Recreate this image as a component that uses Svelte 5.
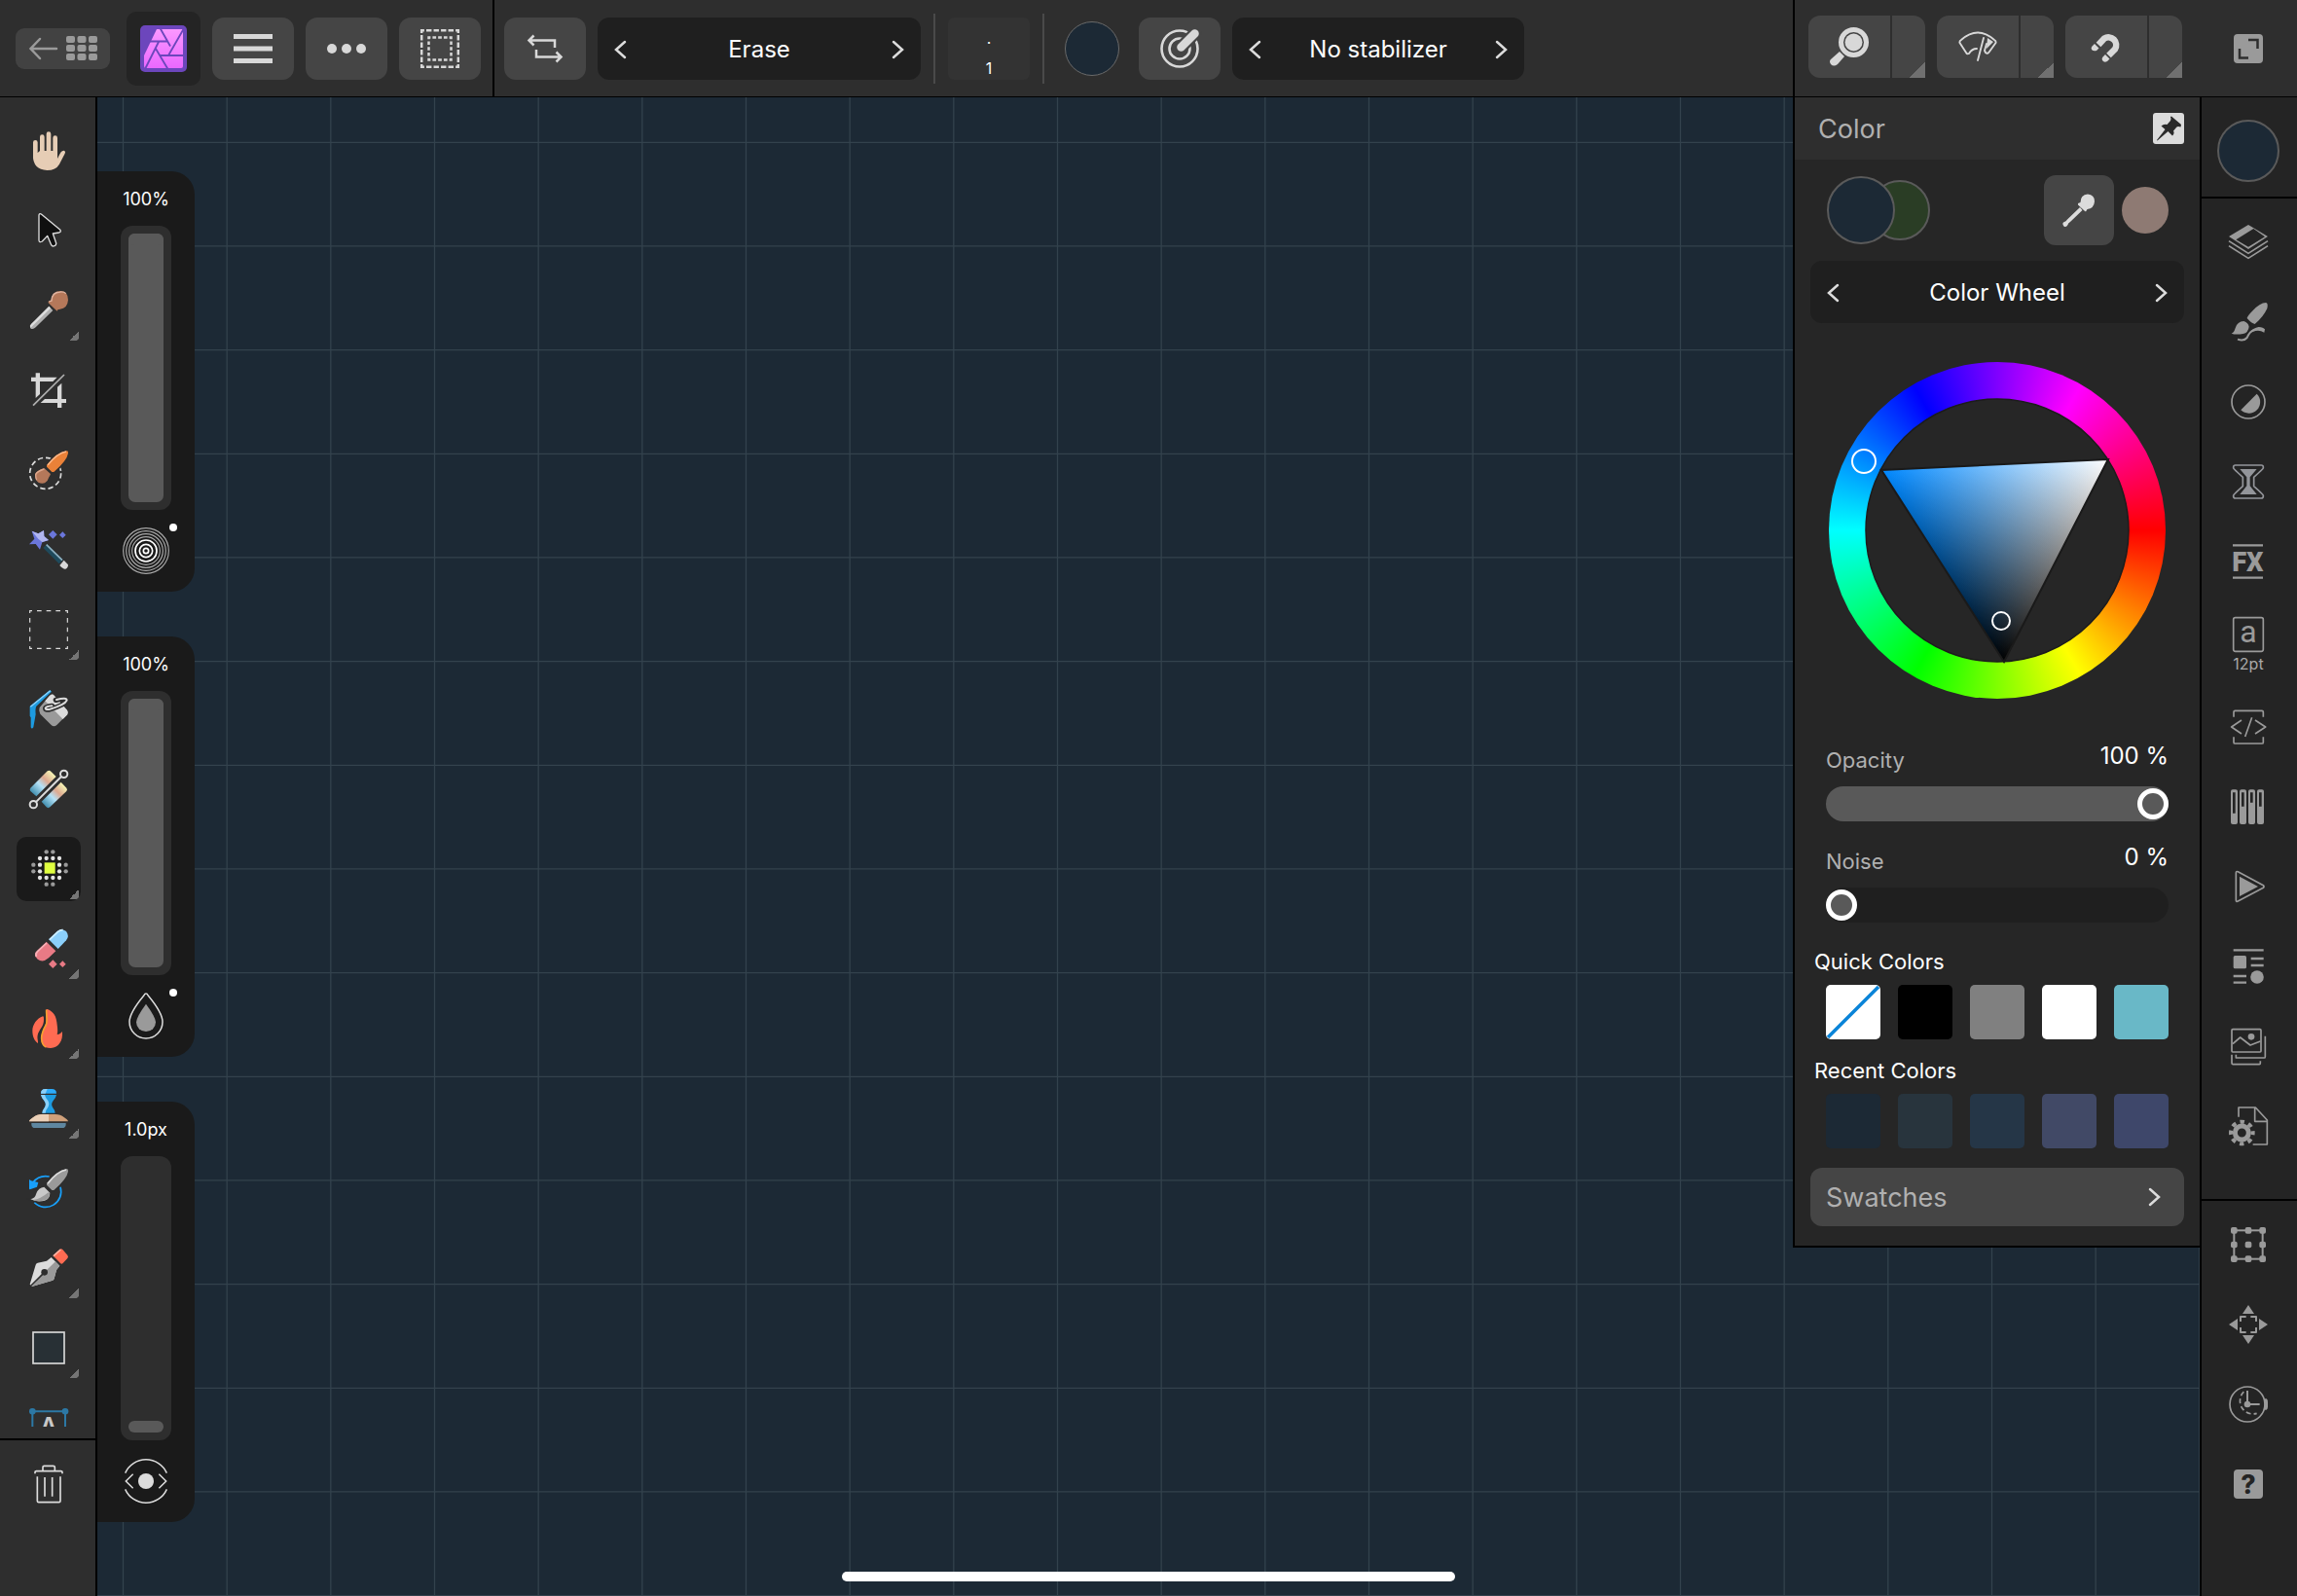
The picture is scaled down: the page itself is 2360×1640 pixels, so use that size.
<script>
  const toolIcons = {
    hand: `<g fill="none" stroke="#e6cdb5" stroke-width="14" stroke-linecap="round"><path d="M19 34V80M40 17V75M60 8V70M80 20V80"/></g><path fill="#e6cdb5" d="M12 66H26L33 60H87V84Q94 70 98 64Q103 58 109 60Q113 63 110 68L93 101Q82 120 55 120Q12 118 12 76Z"/>`,
    move: `<path fill="#0f0f0f" stroke="#dcdcdc" stroke-width="4" stroke-linejoin="round" d="M30 12Q32 5 38 10L95 57Q100 63 92 66L73 69L83 98Q84 105 78 107Q71 110 68 104L56 76L40 93Q31 98 30 90Z"/>`,
    picker: `<path fill="#b5785a" d="M59 32L67 28Q69 2 95 0Q120 0 120 28Q118 54 95 56L88 58L86 62L59 37Z"/><path fill="none" stroke="#dfb4a0" stroke-width="4" d="M61 33L69 30Q70 4 95 3Q108 2 113 8"/><path fill="#b0b0b0" d="M61 47L73 60L20 112Q12 120 5 116Q0 110 6 103Z"/><path fill="#dedede" d="M61 47L66 53L10 108L4 113Q0 107 6 102Z"/>`,
    crop: `<path fill="#d8d8d8" d="M6 20H20V7H33V20H86L73 33H33V72L20 84V33H6Z"/><path fill="#d8d8d8" d="M100 38V87H114V99H100V114H87V99H35L48 87H87V50Z"/><path stroke="#b0b0b0" stroke-width="5" d="M12 107L108 12"/>`,
    selbrush: `<circle cx="50" cy="70" r="48" fill="none" stroke="#dcdcdc" stroke-width="5" stroke-dasharray="16 9.1"/><g stroke="#2e2e2e" stroke-width="10" paint-order="stroke"><path fill="#ea8138" d="M116 1Q121 1 120 8Q117 30 76 66L70 66L54 50V45Q85 5 116 1Z"/></g><path fill="none" stroke="#ffb98a" stroke-width="4" d="M57 45Q86 8 114 3"/><path fill="#b5785a" d="M46 54L66 72Q64 78 61 82Q58 94 48 100Q38 103 28 98Q18 92 18 72Q24 62 46 54Z"/><path fill="none" stroke="#dfa88e" stroke-width="4" d="M46 57Q24 64 20 74Q20 84 23 91"/>`,
    wand: `<path fill="#6b77dc" d="M8 2L28 10L45 0L46 18L60 30L40 37L33 59L20 42L0 43L16 26Z"/><path fill="#b0b5f0" d="M8 2L28 10L45 0L46 18L60 30L40 36L28 26Z"/><path fill="#6b77dc" d="M73 0L86 13L73 26L60 13ZM103 4L113 14L103 24L93 14Z"/><path stroke="#1f4a5c" stroke-width="17" d="M49 48L98 97"/><path stroke="#8fb0c0" stroke-width="5" d="M53 44L102 92"/><path fill="#d8d8d8" d="M107 92L120 106Q120 116 112 119Q106 121 94 108Z"/>`,
    marquee: `<rect x="2" y="2" width="116" height="116" fill="none" stroke="#dcdcdc" stroke-width="3.5" stroke-dasharray="14 15" stroke-dashoffset="7"/>`,
    fill: `<path fill="#1d9be0" d="M64 0L69 5L22 50Q18 58 20 75L17 92L13 115Q8 122 5 115V85L2 80V50Z"/><path fill="none" stroke="#8cd0f8" stroke-width="4" d="M4 52L65 2"/><path fill="#9a9a9a" d="M62 19Q70 9 77 17L117 62Q122 68 117 76L85 108Q76 116 68 108L34 74Q28 64 32 54Z"/><path fill="#dcdcdc" d="M62 19Q70 9 77 17L117 62Q121 68 118 76L104 90L49 34Z"/><path fill="none" stroke="#2e2e2e" stroke-width="16" stroke-linecap="round" d="M82 31Q116 22 116 33Q110 46 62 60Q50 62 50 56Q52 51 70 49"/><path fill="none" stroke="#dcdcdc" stroke-width="6" stroke-linecap="round" d="M84 30Q116 22 116 32Q110 46 64 59Q50 62 50 56Q52 51 70 49"/>`,
    gradient: `<defs><linearGradient id="bandFill" x1="0" y1="1" x2="1" y2="0"><stop offset=".1" stop-color="#3d8bab"/><stop offset=".42" stop-color="#b4e2f8"/><stop offset=".62" stop-color="#dda890"/><stop offset=".85" stop-color="#f3ecb0"/></linearGradient></defs><path fill="url(#bandFill)" d="M4 56L56 4Q62 0 67 5L83 21L22 82L4 66Q0 61 4 56Z"/><path fill="url(#bandFill)" d="M38 98L98 38L115 56Q119 61 115 66L64 115Q58 120 53 115Z"/><path stroke="#2e2e2e" stroke-width="16" d="M13 107L107 13"/><g fill="#2e2e2e" stroke="#dcdcdc" stroke-width="6"><path d="M20 100L99 21"/><circle cx="13" cy="107" r="11"/><circle cx="107" cy="13" r="11"/></g>`,
    pixel: `<g fill="#9a9a9a"><circle cx="53" cy="7" r="6.5"/><circle cx="73" cy="7" r="6.5"/><circle cx="13" cy="47" r="6.5"/><circle cx="113" cy="47" r="6.5"/><circle cx="13" cy="67" r="6.5"/><circle cx="113" cy="67" r="6.5"/><circle cx="53" cy="107" r="6.5"/><circle cx="73" cy="107" r="6.5"/></g><g fill="#e2e2e2"><circle cx="33" cy="27" r="6.5"/><circle cx="53" cy="27" r="6.5"/><circle cx="73" cy="27" r="6.5"/><circle cx="93" cy="27" r="6.5"/><circle cx="33" cy="47" r="6.5"/><circle cx="93" cy="47" r="6.5"/><circle cx="33" cy="67" r="6.5"/><circle cx="93" cy="67" r="6.5"/><circle cx="33" cy="87" r="6.5"/><circle cx="53" cy="87" r="6.5"/><circle cx="73" cy="87" r="6.5"/><circle cx="93" cy="87" r="6.5"/></g><rect x="47" y="40" width="33" height="34" fill="#e0ff40"/>`,
    eraser: `<path fill="#8bcffa" d="M60 31L86 6Q100 -5 114 6Q125 20 114 34L89 60Z"/><path fill="none" stroke="#cdeeff" stroke-width="5" d="M63 32L88 8Q96 1 104 2"/><path fill="#e87a85" d="M53 38L82 67L60 88Q42 104 26 92Q10 78 24 66Z"/><path fill="none" stroke="#f5b0b6" stroke-width="5" d="M54 42L26 68Q18 76 22 84"/><path fill="#e87a85" d="M73 94L86 107L73 120L60 107ZM103 97L113 107L103 117L93 107Z"/>`,
    flame: `<path fill="#ff6b52" d="M56 0C76 8 84 22 86 48C88 62 88 72 86 78C94 78 98 72 102 69C104 98 92 118 66 120C44 120 35 106 37 86C40 62 54 56 52 28Q50 8 52 2Q53 -1 56 0Z"/><path fill="none" stroke="#f5a030" stroke-width="5" d="M53 2C52 20 58 34 52 48C44 62 38 76 38 90C39 104 44 114 52 117"/><path fill="#ff6b52" d="M42 22C24 28 10 48 10 66C10 84 16 98 27 105C28 96 24 92 26 80C30 62 46 54 45 30Q45 20 42 22Z"/>`,
    stamp: `<path fill="#2cabfa" d="M36 14Q36 0 50 0H70Q84 0 84 14Z"/><path fill="#8cd0f8" d="M36 14Q36 0 50 0H56L50 14Z"/><path fill="#1d9be0" d="M36 18H84Q82 28 74 36Q66 46 72 56Q80 66 80 74H40Q40 66 48 56Q54 46 46 36Q38 28 36 18Z"/><path fill="#8cd0f8" d="M36 18H48Q50 28 58 36Q64 46 58 56Q50 66 50 74H40Q40 66 48 56Q54 46 46 36Q38 28 36 18Z"/><path fill="#cfa07a" d="M0 100Q0 96 12 88Q24 78 40 78H80Q96 78 108 88Q120 96 120 100Z"/><path fill="#ead0b8" d="M0 100Q0 96 12 88Q24 78 40 78H60V100Z"/><path fill="#5f87a0" d="M7 105H113V110Q112 120 102 120H18Q8 120 7 110Z"/>`,
    history: `<g fill="none" stroke="#18a0fb" stroke-width="5"><path d="M12 42Q30 18 62 24M96 56A48 48 0 0 1 16 104"/></g><path fill="#18a0fb" d="M0 33L6 37L28 42L24 56L2 64Q0 64 0 60Z"/><g stroke="#2e2e2e" stroke-width="8" paint-order="stroke"><path fill="#9a9a9a" d="M116 0Q121 1 120 8Q117 30 76 66L70 66L54 50V45Q85 5 116 0Z"/><path fill="#c8c8c8" d="M4 94Q18 92 22 76Q28 58 46 56L64 74Q64 92 48 98Q24 104 4 94Z"/></g><path fill="none" stroke="#dcdcdc" stroke-width="5" d="M57 46Q86 8 114 3"/><path fill="#9a9a9a" d="M12 96Q34 94 60 72L63 76Q62 92 48 97Q24 103 12 96Z"/>`,
    pen: `<path fill="#ff6b52" d="M94 3Q98 -2 103 3L118 20Q122 26 118 30L104 45Q100 49 96 45L73 22Z"/><path fill="none" stroke="#ffb5a5" stroke-width="5" d="M75 23L97 3"/><path fill="#dcdcdc" d="M68 27L94 53L84 66L77 92Q76 97 72 98L8 117L2 110L20 50Q21 46 26 44L54 38Z"/><path fill="#9a9a9a" d="M81 40L94 53L84 66L77 92Q76 97 72 98L8 117L47 73Z"/><path stroke="#2e2e2e" stroke-width="5" d="M3 117L47 73"/><circle cx="47" cy="73" r="10" fill="#2e2e2e"/>`,
    shape: `<rect x="12" y="12" width="96" height="96" fill="#283035" stroke="#d8d8d8" stroke-width="5"/>`,
    frametext: `<g fill="none" stroke="#2c78a5" stroke-width="6"><path d="M10 120V10H111V120"/></g><g fill="#2c78a5"><circle cx="10" cy="10" r="10"/><circle cx="111" cy="10" r="10"/></g><text x="60" y="80" text-anchor="middle" font-family="Inter, sans-serif" font-weight="600" font-size="74" fill="#c8c8c8">A</text>`,
    trash: `<g fill="none" stroke="#dcdcdc" stroke-width="5" stroke-linejoin="round"><path d="M18 28V23Q18 20 22 20H98Q102 20 102 23V28M42 18V8Q42 4 46 4H74Q79 4 79 8V18M25 37V112Q25 116 29 116H92Q96 116 96 112V37M48 39V98M71 39V98"/></g>`,
  };

  const studioIcons = {
    layers: `<path fill="#9a9a9a" fill-rule="evenodd" d="M60 6L120 42L60 81L0 42ZM76 18L111 43L60 74L22 52Z"/><path fill="none" stroke="#9a9a9a" stroke-width="5" d="M0 56L60 94L120 56M0 71L60 109L120 71"/>`,
    brushes: `<path fill="#9a9a9a" d="M114 0Q122 1 118 18Q106 44 80 66Q70 64 56 48Q56 42 72 26Q96 0 114 0Z"/><path fill="#9a9a9a" d="M8 95Q16 93 20 78Q26 58 46 57Q60 62 62 74Q60 92 44 96Q20 100 8 95Z"/><path fill="none" stroke="#9a9a9a" stroke-width="6" d="M27 113Q46 120 56 108Q64 88 80 82"/><path fill="#9a9a9a" d="M66 92Q74 78 92 75Q106 76 111 82L109 92Q92 82 74 90Z"/>`,
    adjust: `<circle cx="60" cy="60" r="51" fill="none" stroke="#9a9a9a" stroke-width="5"/><path fill="#9a9a9a" d="M86 35A34 34 0 0 1 37 85Z"/>`,
    history: `<path fill="none" stroke="#93959a" stroke-width="5" stroke-linejoin="round" d="M20 9H100Q106 9 106 15V18Q104 22 77 46V74Q104 98 106 102V105Q106 111 100 111H20Q14 111 14 105V102Q16 98 43 74V46Q16 22 14 18V15Q14 9 20 9Z"/><path fill="#93959a" d="M34 21H86L65 46V73L86 99H34L55 73V46Z"/>`,
    fx: `<path stroke="#9a9a9a" stroke-width="7" d="M12 10H105M12 110H105"/><text x="58" y="91" text-anchor="middle" font-family="Roboto, sans-serif" font-weight="900" font-size="82" fill="#9a9a9a">FX</text>`,
    text: `<rect x="14" y="8" width="92" height="104" rx="6" fill="none" stroke="#9a9a9a" stroke-width="5"/><text x="60" y="85" text-anchor="middle" font-family="Roboto, sans-serif" font-size="96" fill="#9a9a9a">a</text>`,
    code: `<path fill="none" stroke="#9a9a9a" stroke-width="5" stroke-linejoin="round" d="M15 29V14Q15 10 19 10H102Q106 10 106 14V29M15 91V107Q15 111 19 111H102Q106 111 106 107V91M39 39L8 60L39 81M81 39L113 60L81 81M71 31L50 90"/>`,
    channels: `<g fill="#9a9a9a"><rect x="6" y="7" width="21" height="107" rx="6"/><rect x="33" y="7" width="21" height="107" rx="6"/><rect x="60" y="7" width="21" height="107" rx="6"/><rect x="87" y="7" width="21" height="107" rx="6"/></g><path stroke="#242424" stroke-width="8" d="M16 16V80M43 16V59M70 16V47M97 16V59"/>`,
    play: `<path fill="none" stroke="#9a9a9a" stroke-width="5" stroke-linejoin="round" d="M22 18Q22 12 28 14L106 56Q110 60 106 64L28 105Q22 108 22 102Z"/><path fill="#9a9a9a" d="M33 29L90 60L33 90Z"/>`,
    assets: `<path stroke="#9a9a9a" stroke-width="7" d="M14 10H107M68 36H107M68 57H107M14 90H54M14 110H54"/><rect x="14" y="27" width="40" height="40" rx="5" fill="#9a9a9a"/><circle cx="87" cy="93" r="20.500" fill="#9a9a9a"/>`,
    stock: `<g fill="none" stroke="#9a9a9a" stroke-width="5" stroke-linejoin="round"><rect x="9" y="8" width="90" height="70" rx="3"/><path d="M12 53L35 33L66 57L97 45M22 86V96H109Q112 96 112 92V29M9 86V112Q9 116 13 116H94Q97 116 97 112V106"/></g><circle cx="69" cy="31" r="10" fill="#9a9a9a"/>`,
    document: `<g fill="none" stroke="#9a9a9a" stroke-width="5" stroke-linejoin="round"><path d="M30 32V3H82L118 42V117H74M80 3V46H118"/></g><circle cx="40" cy="81" r="21" fill="none" stroke="#9a9a9a" stroke-width="15"/><circle cx="40" cy="81" r="34" fill="none" stroke="#9a9a9a" stroke-width="12" stroke-dasharray="13.3 13.4" stroke-dashoffset="6.6"/>`,
    transform: `<rect x="16" y="16" width="88" height="88" fill="none" stroke="#9a9a9a" stroke-width="6"/><g fill="#9a9a9a"><rect x="6" y="6" width="20" height="20" rx="6"/><rect x="50" y="6" width="20" height="20" rx="6"/><rect x="94" y="6" width="20" height="20" rx="6"/><rect x="6" y="50" width="20" height="20" rx="6"/><rect x="50" y="50" width="20" height="20" rx="6"/><rect x="94" y="50" width="20" height="20" rx="6"/><rect x="6" y="94" width="20" height="20" rx="6"/><rect x="50" y="94" width="20" height="20" rx="6"/><rect x="94" y="94" width="20" height="20" rx="6"/></g>`,
    navigator: `<g fill="#9a9a9a"><path d="M60 0L78 27H42ZM60 120L78 93H42ZM0 60L27 42V78ZM120 60L93 42V78Z"/></g><path fill="none" stroke="#9a9a9a" stroke-width="6" d="M36 51V36H53M67 36H84V51M84 69V84H67M53 84H36V69" stroke-linejoin="round"/>`,
    clock: `<circle cx="57" cy="60" r="54" fill="none" stroke="#9a9a9a" stroke-width="5"/><path fill="#9a9a9a" d="M109 43H116Q120 46 120 52V68Q120 74 116 77H109Z"/><path fill="none" stroke="#9a9a9a" stroke-width="6" d="M57 18V60H95"/><circle cx="57" cy="60" r="10" fill="#9a9a9a"/><path fill="none" stroke="#9a9a9a" stroke-width="5" stroke-dasharray="15 9" d="M46 21.500A40 40 0 0 0 86 88"/>`,
    help: `<rect x="15" y="15" width="90" height="90" rx="12" fill="#9a9a9a"/><text x="60" y="90" text-anchor="middle" font-family="Inter, sans-serif" font-weight="800" font-size="80" fill="#242424">?</text>`,
  };

  const tools = [
    { id: 'hand', label: 'View' },
    { id: 'move', label: 'Move' },
    { id: 'picker', label: 'Color Picker', more: true },
    { id: 'crop', label: 'Crop' },
    { id: 'selbrush', label: 'Selection Brush' },
    { id: 'wand', label: 'Flood Select' },
    { id: 'marquee', label: 'Marquee', more: true },
    { id: 'fill', label: 'Flood Fill' },
    { id: 'gradient', label: 'Gradient' },
    { id: 'pixel', label: 'Pixel', more: true },
    { id: 'eraser', label: 'Erase Brush', more: true },
    { id: 'flame', label: 'Burn', more: true },
    { id: 'stamp', label: 'Clone', more: true },
    { id: 'history', label: 'Undo Brush' },
    { id: 'pen', label: 'Pen', more: true },
    { id: 'shape', label: 'Rectangle', more: true },
    { id: 'frametext', label: 'Frame Text' },
  ];
  let activeTool = $state('pixel');

  const studios = [
    { id: 'layers', label: 'Layers' },
    { id: 'brushes', label: 'Brushes' },
    { id: 'adjust', label: 'Adjustments' },
    { id: 'history', label: 'Filters' },
    { id: 'fx', label: 'Layer FX' },
    { id: 'text', label: 'Text', caption: '12pt' },
    { id: 'code', label: 'Metadata' },
    { id: 'channels', label: 'Channels' },
    { id: 'play', label: 'Macros' },
    { id: 'assets', label: 'Assets' },
    { id: 'stock', label: 'Stock' },
    { id: 'document', label: 'Document' },
  ];
  const utilities = [
    { id: 'transform', label: 'Transform' },
    { id: 'navigator', label: 'Navigator' },
    { id: 'clock', label: 'History' },
    { id: 'help', label: 'Help' },
  ];

  const rings = `<g fill="none" stroke="#fff" stroke-width="5"><circle cx="72" cy="72" r="8"/><circle cx="72" cy="72" r="20"/><circle cx="72" cy="72" r="33"/></g><g fill="none" stroke="#a8a8a8" stroke-width="3.5"><circle cx="72" cy="72" r="43"/><circle cx="72" cy="72" r="52"/><circle cx="72" cy="72" r="61"/><circle cx="72" cy="72" r="70"/></g>`;
  const drop = `<path fill="none" stroke="#dcdcdc" stroke-width="4.5" d="M72 3Q68 3 66 8Q21 62 21 90A51 51 0 0 0 123 90Q123 62 78 8Q76 3 72 3Z"/><path fill="#9a9a9a" d="M72 35Q102 76 102 91A30 29 0 0 1 42 91Q42 76 72 35Z"/>`;
  const sizeEye = `<g fill="none" stroke="#dcdcdc" stroke-width="4.5"><path d="M8 47A70 70 0 0 1 136 47M8 97A70 70 0 0 0 136 97M32 50L10 72L32 94M112 50L134 72L112 94"/></g><circle cx="72" cy="72" r="24" fill="#dcdcdc"/>`;
  let brushSliders = $state([
    { label: 'Opacity', text: '100%', value: 100, icon: rings, dot: true },
    { label: 'Flow', text: '100%', value: 100, icon: drop, dot: true },
    { label: 'Width', text: '1.0px', value: 0, icon: sizeEye, dot: false },
  ]);

  let mixers = $state([
    { id: 'opacity', label: 'Opacity', value: 100 },
    { id: 'noise', label: 'Noise', value: 0 },
  ]);
  const quickColors = ['none', '#000000', '#808080', '#ffffff', '#69b8c7'];
  const recentColors = ['#1c2935', '#28343d', '#253647', '#414966', '#3e476a'];

  // Document grid, three cells to 320px.
  const pitch = 320 / 3;
  const columns = Array.from({ length: 40 }, (_, i) => 26.5 + i * pitch);
  const rows = Array.from({ length: 24 }, (_, i) => 46.3 + i * pitch);

  // Shade triangle: full hue, white and black corners, blended by distance to the opposite edge.
  const hueAt = [54, 111];
  const whiteAt = [287, 100];
  const blackAt = [180, 308];
  function foot(p, a, b) {
    const d = [b[0] - a[0], b[1] - a[1]];
    const t = ((p[0] - a[0]) * d[0] + (p[1] - a[1]) * d[1]) / (d[0] ** 2 + d[1] ** 2);
    return [a[0] + t * d[0], a[1] + t * d[1]];
  }
  const hueFoot = foot(hueAt, whiteAt, blackAt);
  const whiteFoot = foot(whiteAt, hueAt, blackAt);
  const corners = [hueAt, whiteAt, blackAt].join(' ');
</script>

{#snippet chevron(dir)}
  <svg class="chev" viewBox="0 0 12 18" aria-hidden="true">
    <path d={dir === 'left' ? 'M11 1L2 9L11 17' : 'M1 1L10 9L1 17'} />
  </svg>
{/snippet}

{#snippet stepper(text, what)}
  <button class="step" aria-label={`Previous ${what}`}>{@render chevron('left')}</button>
  <span>{text}</span>
  <button class="step" aria-label={`Next ${what}`}>{@render chevron('right')}</button>
{/snippet}

<div class="app">
  <header class="topbar">
    <div class="group start">
      <button class="back" aria-label="Back to gallery">
        <svg width="70" height="26" viewBox="0 0 70 26" aria-hidden="true">
          <path d="M28 13H2M11 3L1.500 13L11 23" fill="none" stroke="#9a9a9a" stroke-width="2.500" stroke-linecap="round" />
          {#each [0, 1, 2] as r}
            {#each [0, 1, 2] as c}
              <rect x={38 + c * 11.5} y={r * 9} width="9" height="7" rx="2" fill="#9a9a9a" />
            {/each}
          {/each}
        </svg>
      </button>
      <button class="persona" aria-label="Photo persona">
        <svg width="48" height="48" viewBox="0 0 48 48" aria-hidden="true">
          <defs>
            <linearGradient id="personaPink" x1="0" y1="0" x2="0" y2="1">
              <stop offset="0" stop-color="#fb98ff" /><stop offset="1" stop-color="#ea68ff" />
            </linearGradient>
          </defs>
          <rect width="48" height="48" rx="5" fill="#6c46bc" />
          <path fill="url(#personaPink)" d="M17 4H43Q44 4 44 5V42Q44 44 42 44H6Q4 44 4 42V31Z" />
          <path fill="none" stroke="#6c46bc" stroke-width="1.800" d="M20.500 3L31 21.500M44.500 4L29 31M45 31H20M28.500 45L16 24M5 45L19 17M9 16.500H28.500" />
        </svg>
      </button>
      <button class="key" aria-label="Menu">
        <svg width="40" height="30" viewBox="0 0 40 30" aria-hidden="true"><path fill="#d8d8d8" d="M0 0H40V5H0ZM0 12.500H40V17.500H0ZM0 25H40V30H0Z" /></svg>
      </button>
      <button class="key" aria-label="More">
        <svg width="40" height="10" viewBox="0 0 40 10" aria-hidden="true"><g fill="#d8d8d8"><circle cx="5" cy="5" r="5" /><circle cx="20" cy="5" r="5" /><circle cx="35" cy="5" r="5" /></g></svg>
      </button>
      <button class="key" aria-label="Selection">
        <svg width="40" height="40" viewBox="0 0 40 40" aria-hidden="true">
          <g fill="none" stroke="#d8d8d8" stroke-width="2.500">
            <rect x="1.200" y="1.200" width="37.600" height="37.600" stroke-dasharray="5.400 2.120" stroke-dashoffset="2.700" />
            <rect x="8.500" y="8.500" width="23" height="23" stroke-dasharray="3.700 2.050" stroke-dashoffset="1.850" />
          </g>
        </svg>
      </button>
    </div>

    <div class="group context">
      <button class="key" aria-label="Swap">
        <svg width="36" height="28" viewBox="0 0 36 28" aria-hidden="true">
          <path fill="none" stroke="#d8d8d8" stroke-width="2.500" d="M28 13V5.500H2M6.500 .5L1.500 5.500L6.500 10.500M9 15V22.500H34M29.500 17.500L34.500 22.500L29.500 27.500" />
        </svg>
      </button>
      <div class="stepper mode">{@render stepper('Erase', 'blend mode')}</div>
      <i class="rule"></i>
      <button class="brush"><span>·</span><span>1</span></button>
      <i class="rule"></i>
      <button class="well" aria-label="Brush color"></button>
      <button class="key" aria-label="Precision">
        <svg width="40" height="40" viewBox="0 0 40 40" aria-hidden="true">
          <g fill="none" stroke="#d8d8d8" stroke-width="2.600"><circle cx="20" cy="20" r="18.500" /><circle cx="20" cy="20" r="10.500" /></g>
          <path stroke="#454545" stroke-width="13" stroke-linecap="round" d="M22 18L36 4" />
          <path stroke="#d8d8d8" stroke-width="8.500" stroke-linecap="round" d="M21.500 18.500L35.500 4.500" />
        </svg>
      </button>
      <div class="stepper stabilizer">{@render stepper('No stabilizer', 'stabilizer')}</div>
    </div>

    <div class="group end">
      <div class="split">
        <button aria-label="Zoom">
          <svg width="40" height="40" viewBox="0 0 40 40" aria-hidden="true"><circle cx="24.500" cy="15.500" r="13" fill="none" stroke="#d8d8d8" stroke-width="5" /><circle cx="24.500" cy="15.500" r="9" fill="#d8d8d8" /><path fill="#d8d8d8" d="M10 25L15 30L8 38Q4 41 1 38Q-1 35 1 33Z" /></svg>
        </button>
        <button class="more" aria-label="Zoom options"></button>
      </div>
      <div class="split">
        <button aria-label="Preview">
          <svg width="40" height="32" viewBox="0 0 40 32" aria-hidden="true"><g fill="none" stroke="#d8d8d8" stroke-width="1.900" stroke-linejoin="round" stroke-linecap="round"><path d="M19 18Q14 18 11 23Q9 24 8 22L1.500 12Q1 10 3 9Q20 -6 37 9Q39 10 38.500 12L32 21Q30 24 28 22L27 20L29 13M26 7L20 30" /></g><path fill="#d8d8d8" d="M30 7L36 11L29 18Z" /></svg>
        </button>
        <button class="more" aria-label="Preview options"></button>
      </div>
      <div class="split">
        <button aria-label="Snapping">
          <svg width="32" height="32" viewBox="0 0 32 32" aria-hidden="true"><path fill="none" stroke="#d8d8d8" stroke-width="6.500" d="M8 14L14 7.500A8 8 0 0 1 25 18.500L18.500 25" /><path fill="#d8d8d8" d="M4 13L8.500 17.500L6 20Q3 21 1 19Q0 17 1.500 15.500ZM15 24L19.500 28.500L17 31Q14 33 12 30Q11 28 12.500 26.500Z" /></svg>
        </button>
        <button class="more" aria-label="Snapping options"></button>
      </div>
      <button class="expand" aria-label="Full screen">
        <svg width="30" height="30" viewBox="0 0 30 30" aria-hidden="true"><rect width="30" height="30" rx="4" fill="#9a9a9a" /><path fill="none" stroke="#2e2e2e" stroke-width="2.500" d="M15 6H24.500V15M6 15V24.500H15" /></svg>
      </button>
    </div>
  </header>

  <div class="body">
    <nav class="toolbar" aria-label="Tools">
      <div class="tools">
        {#each tools as tool (tool.id)}
          <button class="tool" class:active={tool.id === activeTool} class:more={tool.more} aria-label={tool.label} onclick={() => (activeTool = tool.id)}>
            <svg width="40" height="40" viewBox="0 0 120 120" aria-hidden="true">{@html toolIcons[tool.id]}</svg>
          </button>
        {/each}
      </div>
      <div class="bin">
        <button aria-label="Delete"><svg width="40" height="40" viewBox="0 0 120 120" aria-hidden="true">{@html toolIcons.trash}</svg></button>
      </div>
    </nav>

    <main class="canvas">
      <svg class="grid" aria-hidden="true">
        {#each columns as x}<line x1={x} x2={x} y1="0" y2="100%" />{/each}
        {#each rows as y}<line x1="0" x2="100%" y1={y} y2={y} />{/each}
      </svg>

      <div class="brushbars">
        {#each brushSliders as s (s.label)}
          <section class="brushbar">
            <span class="amount">{s.text}</span>
            <label class="vtrack">
              <input type="range" min="0" max="100" bind:value={s.value} aria-label={s.label} style:--fill={`${s.value}%`} />
            </label>
            <button class="dynamics" class:dot={s.dot} aria-label={`${s.label} dynamics`}>
              <svg width="48" height="48" viewBox="0 0 144 144" aria-hidden="true">{@html s.icon}</svg>
            </button>
          </section>
        {/each}
      </div>

      <aside class="panel" aria-label="Color">
        <header>
          <h2>Color</h2>
          <button class="pin" aria-label="Pin panel">
            <svg width="32" height="32" viewBox="0 0 32 32" aria-hidden="true"><rect width="32" height="32" rx="3" fill="#dcdcdc" /><path fill="#2a2a2a" d="M19 3.500L29 12L28.500 14.500Q25 13.500 24 15L21 18.500Q22.500 21 20 23.500L15.500 19L4.500 28.500L4 28L12.500 17L8.500 13.500Q11 11 14.500 12L18 8Q19 6 18 4Z" /></svg>
          </button>
        </header>
        <div class="content">
          <div class="colors">
            <button class="disc primary" aria-label="Primary color"></button>
            <button class="disc secondary" aria-label="Secondary color"></button>
            <button class="pick" aria-label="Color picker">
              <svg width="34" height="34" viewBox="0 0 34 34" aria-hidden="true"><path fill="#dcdcdc" d="M16 10L18.500 9Q18.500 1 26 .5Q33 1 33 8Q32.500 15 25.500 16L24 18.500L22.500 17.500L16 11.500ZM18 14L20.500 17L8 29Q6 30 5.500 32Q4 35 1.500 33.500Q-.5 31 1 29.500Q4 28.500 5 26.500Z" /></svg>
            </button>
            <button class="picked" aria-label="Picked color"></button>
          </div>

          <div class="stepper">{@render stepper('Color Wheel', 'color mode')}</div>

          <div class="wheel">
            <svg viewBox="0 0 346 346" role="img" aria-label="Hue ring and shade triangle">
              <defs>
                <linearGradient id="hueShade" gradientUnits="userSpaceOnUse" x1={hueAt[0]} y1={hueAt[1]} x2={hueFoot[0]} y2={hueFoot[1]}>
                  <stop offset="0" stop-color="#0088ff" /><stop offset="1" stop-color="#000" />
                </linearGradient>
                <linearGradient id="whiteShade" gradientUnits="userSpaceOnUse" x1={whiteAt[0]} y1={whiteAt[1]} x2={whiteFoot[0]} y2={whiteFoot[1]}>
                  <stop offset="0" stop-color="#fff" /><stop offset="1" stop-color="#000" />
                </linearGradient>
              </defs>
              <circle cx="173" cy="173" r="135" fill="#262626" stroke="#1c1c1c" stroke-width="1.500" />
              <g class="shades">
                <polygon points={corners} fill="url(#hueShade)" />
                <polygon class="add" points={corners} fill="url(#whiteShade)" />
              </g>
              <polygon points={corners} fill="none" stroke="#1a1a1a" stroke-width="2" />
              <g fill="none" stroke="#fff" stroke-width="2"><circle cx="36" cy="102" r="12" /><circle cx="177" cy="266" r="9" /></g>
            </svg>
          </div>

          {#each mixers as m (m.id)}
            <div class="mixer">
              <div class="legend">
                <label for={m.id}>{m.label}</label>
                <output for={m.id}>{m.value} %</output>
              </div>
              <input id={m.id} type="range" min="0" max="100" bind:value={m.value} style:--fill={`${m.value}%`} />
            </div>
          {/each}

          <h3>Quick Colors</h3>
          <div class="swatches">
            {#each quickColors as c}
              {#if c === 'none'}
                <button class="empty" aria-label="No color"><svg viewBox="0 0 56 56" aria-hidden="true"><path d="M2 54L54 2" stroke="#0a84d8" stroke-width="3.500" /></svg></button>
              {:else}
                <button aria-label={c} style:background-color={c}></button>
              {/if}
            {/each}
          </div>
          <h3 class="recent">Recent Colors</h3>
          <div class="swatches">
            {#each recentColors as c}<button aria-label={c} style:background-color={c}></button>{/each}
          </div>

          <button class="link">Swatches {@render chevron('right')}</button>
        </div>
      </aside>
    </main>

    <nav class="studios" aria-label="Studios">
      <div class="current"><button class="disc" aria-label="Color studio"></button></div>
      <div class="list">
        {#each studios as s (s.id)}
          <button class="studio" class:captioned={s.caption} aria-label={s.label}>
            <svg width="40" height="40" viewBox="0 0 120 120" aria-hidden="true">{@html studioIcons[s.id]}</svg>
            {#if s.caption}<span>{s.caption}</span>{/if}
          </button>
        {/each}
      </div>
      <div class="list foot">
        {#each utilities as s (s.id)}
          <button class="studio" aria-label={s.label}>
            <svg width="40" height="40" viewBox="0 0 120 120" aria-hidden="true">{@html studioIcons[s.id]}</svg>
          </button>
        {/each}
      </div>
    </nav>
  </div>

  <div class="home"></div>
</div>

<style>
  :global(body) {
    margin: 0;
    background: #1c2935;
  }
  * {
    box-sizing: border-box;
  }
  button {
    display: flex;
    align-items: center;
    justify-content: center;
    flex: none;
    padding: 0;
    border: 0;
    background: none;
    color: inherit;
    font: inherit;
    cursor: pointer;
  }
  svg {
    display: block;
    flex: none;
    overflow: visible;
  }
  .app {
    position: relative;
    display: flex;
    flex-direction: column;
    height: 100vh;
    overflow: hidden;
    color: #fff;
    font-family: Inter, 'Noto Sans', sans-serif;
    font-size: 24px;
  }

  .topbar {
    display: flex;
    flex: none;
    height: 100px;
    background: #2e2e2e;
    border-bottom: 1px solid #000;
  }
  .group {
    display: flex;
    align-items: center;
    gap: 12px;
    padding-top: 1px;
  }
  .start {
    padding-left: 16px;
    padding-right: 12px;
    border-right: 2px solid #000;
  }
  .context {
    flex: 1;
    padding-left: 10px;
  }
  .end {
    width: 518px;
    padding-left: 14px;
    border-left: 2px solid #000;
  }
  .back {
    width: 97px;
    height: 42px;
    margin-right: 5px;
    border-radius: 9px;
    background: #424242;
  }
  .persona {
    width: 76px;
    height: 76px;
    border-radius: 10px;
    background: #242424;
  }
  .key {
    width: 84px;
    height: 64px;
    border-radius: 12px;
    background: #454545;
  }
  .stepper {
    display: flex;
    align-items: center;
    justify-content: space-between;
    height: 64px;
    padding: 1px 5px 0;
    border-radius: 12px;
    background: #1f1f1f;
  }
  .step {
    width: 36px;
    height: 48px;
  }
  .mode {
    width: 332px;
  }
  .stabilizer {
    width: 300px;
  }
  .chev {
    width: 12px;
    height: 18px;
  }
  .chev path {
    fill: none;
    stroke: #dcdcdc;
    stroke-width: 2.5;
    stroke-linecap: round;
  }
  .rule {
    width: 2px;
    height: 72px;
    margin: 0 1px;
    background: #4a4a4a;
  }
  .brush {
    flex-direction: column;
    justify-content: flex-end;
    gap: 6px;
    width: 84px;
    height: 64px;
    padding-bottom: 2px;
    border-radius: 6px;
    background: #333;
    font-size: 16px;
    line-height: 20px;
  }
  .well {
    width: 56px;
    height: 56px;
    margin: 0 8px;
    border: 1px solid #6a6a6a;
    border-radius: 50%;
    background: #1c2935;
  }
  .split {
    display: flex;
    gap: 2px;
    height: 64px;
    margin-bottom: 4px;
    border-radius: 12px 12px 0 12px;
    overflow: hidden;
  }
  .split button {
    width: 84px;
    background: #454545;
  }
  .split .more {
    width: 34px;
    background: linear-gradient(135deg, transparent 50%, #707070 50%) right bottom / 16px 16px no-repeat #454545;
  }
  .expand {
    width: 100px;
    height: 64px;
    margin-left: auto;
  }

  .body {
    display: flex;
    flex: 1;
    min-height: 0;
  }
  .toolbar {
    display: flex;
    flex-direction: column;
    flex: none;
    width: 100px;
    background: #2e2e2e;
    border-right: 2px solid #000;
  }
  .tools {
    display: flex;
    flex-direction: column;
    align-items: center;
    flex: 1;
    gap: 16px;
    min-height: 0;
    margin-bottom: 12px;
    padding: 22px 0 0 2px;
    overflow: hidden;
  }
  .tool {
    width: 66px;
    height: 66px;
    border-radius: 10px;
  }
  .tool.active {
    background-color: #1a1a1a;
  }
  .tool.more {
    background-image: linear-gradient(135deg, transparent 50%, #757575 50%);
    background-position: right 2px bottom 2px;
    background-size: 10px 10px;
    background-repeat: no-repeat;
  }
  .bin {
    display: flex;
    justify-content: center;
    height: 162px;
    padding: 25px 0 0 2px;
    align-items: flex-start;
    border-top: 2px solid #000;
  }

  .canvas {
    position: relative;
    display: flex;
    justify-content: space-between;
    align-items: flex-start;
    flex: 1;
    min-width: 0;
    background: #1c2935;
  }
  .grid {
    position: absolute;
    inset: 0;
    width: 100%;
    height: 100%;
    overflow: hidden;
  }
  .grid line {
    stroke: #33424d;
    stroke-width: 1.3;
  }
  .brushbars {
    position: relative;
    display: flex;
    flex-direction: column;
    gap: 46px;
    padding-top: 76px;
  }
  .brushbar {
    display: flex;
    flex-direction: column;
    align-items: center;
    width: 100px;
    height: 432px;
    padding-top: 17px;
    border-radius: 0 24px 24px 0;
    background: #1a1a1a;
  }
  .amount {
    margin-bottom: 15px;
    font-size: 18px;
    line-height: 24px;
  }
  .vtrack {
    display: block;
    padding: 8px;
    border-radius: 12px;
    background: #2e2e2e;
  }
  .vtrack input {
    appearance: none;
    display: block;
    width: 36px;
    height: 276px;
    margin: 0;
    border-radius: 7px;
    writing-mode: vertical-lr;
    direction: rtl;
    background: linear-gradient(to top, #595959 var(--fill), transparent var(--fill));
  }
  .vtrack input::-webkit-slider-thumb {
    appearance: none;
    width: 36px;
    height: 12px;
    border-radius: 6px;
    background: #595959;
  }
  .dynamics {
    position: relative;
    margin-top: 18px;
  }
  .dynamics.dot::after {
    content: '';
    position: absolute;
    top: -4px;
    right: -8px;
    width: 8px;
    height: 8px;
    border-radius: 50%;
    background: #fff;
  }

  .panel {
    position: relative;
    width: 418px;
    background: #262626;
    border-left: 2px solid #000;
    border-bottom: 2px solid #000;
  }
  .panel header {
    display: flex;
    align-items: center;
    justify-content: space-between;
    height: 64px;
    padding: 0 16px 0 24px;
    background: #2e2e2e;
  }
  h2,
  h3 {
    margin: 0;
    font-weight: 400;
  }
  h2 {
    color: #b0b0b0;
    font-size: 27px;
  }
  .content {
    padding: 16px 16px 20px;
  }
  .colors {
    display: flex;
    align-items: center;
    height: 72px;
    margin-bottom: 16px;
    padding: 0 16px 0 17px;
  }
  .disc {
    border: 2px solid #5a5a5a;
    border-radius: 50%;
    background: #1c2935;
  }
  .primary {
    z-index: 1;
    width: 70px;
    height: 70px;
  }
  .secondary {
    width: 62px;
    height: 62px;
    margin-left: -26px;
    background: #2a3d25;
  }
  .pick {
    width: 72px;
    height: 72px;
    margin-left: auto;
    border-radius: 12px;
    background: #454545;
  }
  .picked {
    width: 48px;
    height: 48px;
    margin-left: 8px;
    border-radius: 50%;
    background: #8e7a73;
  }
  .wheel {
    width: 346px;
    height: 346px;
    margin: 40px auto 44px;
    border-radius: 50%;
    background: conic-gradient(from 90deg, #f00, #ff0, #0f0, #0ff, #00f, #f0f, #f00);
  }
  .shades {
    isolation: isolate;
  }
  .add {
    mix-blend-mode: plus-lighter;
  }
  .mixer {
    margin: 0 16px 22px;
  }
  .legend {
    display: flex;
    justify-content: space-between;
    height: 46px;
    line-height: 30px;
  }
  .legend label {
    padding-top: 4px;
    color: #b0b0b0;
    font-size: 22px;
  }
  .mixer input {
    appearance: none;
    display: block;
    width: 100%;
    height: 36px;
    margin: 0;
    border-radius: 18px;
    background: linear-gradient(to right, #595959 var(--fill), #1f1f1f var(--fill));
  }
  .mixer input::-webkit-slider-thumb {
    appearance: none;
    width: 32px;
    height: 32px;
    border: 5px solid #fff;
    border-radius: 50%;
    background: #595959;
  }
  h3 {
    margin: 26px 4px 10px;
    font-size: 22px;
    line-height: 28px;
  }
  h3.recent {
    margin-top: 18px;
  }
  .swatches {
    display: flex;
    justify-content: space-between;
    padding: 0 16px;
  }
  .swatches button {
    width: 56px;
    height: 56px;
    border-radius: 5px;
  }
  .swatches .empty {
    background: #fff;
  }
  .empty svg {
    width: 56px;
    height: 56px;
  }
  .link {
    justify-content: space-between;
    width: 100%;
    height: 60px;
    margin-top: 20px;
    padding: 0 24px 0 16px;
    border-radius: 12px;
    background: #454545;
    color: #b0b0b0;
    font-size: 27px;
  }

  .studios {
    display: flex;
    flex-direction: column;
    flex: none;
    width: 100px;
    background: #242424;
    border-left: 2px solid #000;
  }
  .current {
    display: flex;
    justify-content: center;
    padding: 23px 2px 15px 0;
    border-bottom: 2px solid #000;
  }
  .current .disc {
    width: 64px;
    height: 64px;
  }
  .list {
    flex: 1;
    padding: 4px 2px 0 0;
  }
  .foot {
    flex: none;
    height: 408px;
    border-top: 2px solid #000;
  }
  .studio {
    flex-direction: column;
    width: 100%;
    height: 82px;
    color: #a8a8a8;
    font-size: 16px;
    line-height: 20px;
  }
  .captioned {
    height: 88px;
  }

  .home {
    position: absolute;
    bottom: 15px;
    left: 50%;
    width: 630px;
    height: 10px;
    margin-left: -315px;
    border-radius: 5px;
    background: #fff;
  }
</style>
